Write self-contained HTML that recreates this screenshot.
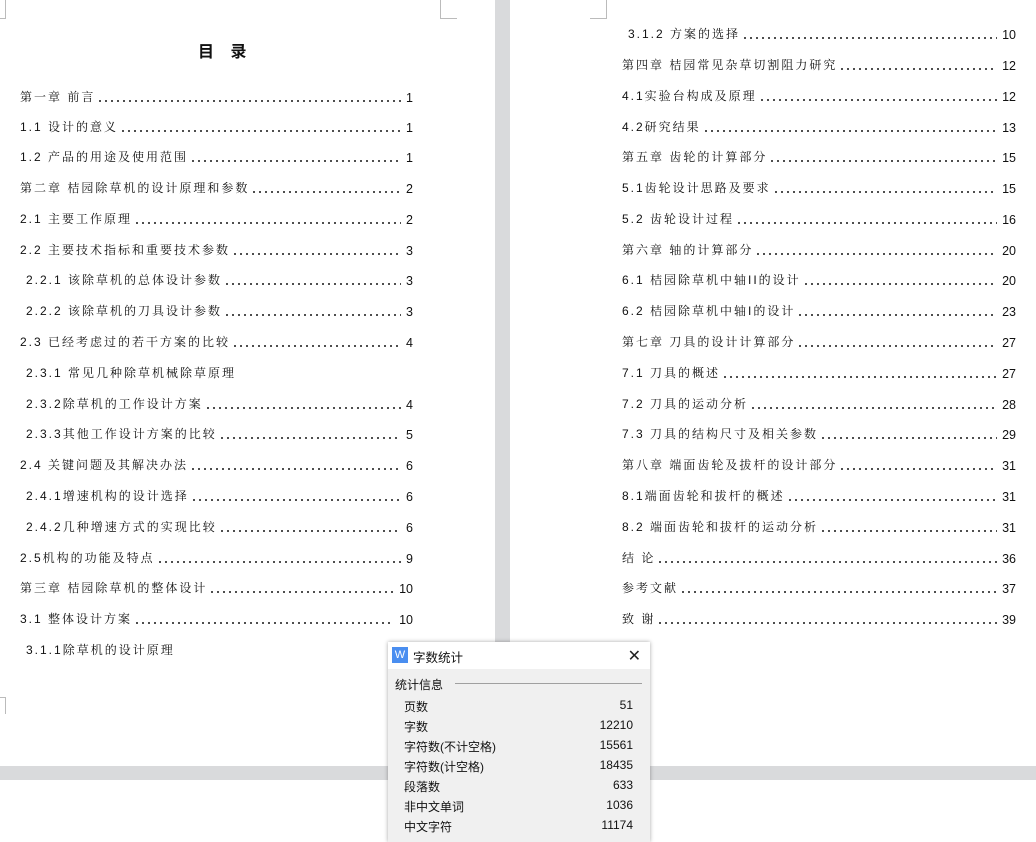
<!DOCTYPE html>
<html><head><meta charset="utf-8"><style>
*{margin:0;padding:0;box-sizing:border-box}
body{width:1036px;height:837px;overflow:hidden;background:#fff;position:relative;font-family:"Liberation Sans","Noto Serif CJK SC","Noto Sans CJK SC",sans-serif;color:#111}
.gap{position:absolute;left:495px;top:0;width:15px;height:766px;background:#d9dadc}
.band{position:absolute;left:0;top:766px;width:1036px;height:14px;background:#d9dadc}
.m{position:absolute;background:#bbb}
.title{position:absolute;left:198px;top:38px;font-size:16px;font-weight:bold;letter-spacing:6px;font-family:"Liberation Sans","Noto Sans CJK SC",sans-serif}
.row{position:absolute;display:flex;align-items:flex-end;height:16px;font-size:12px;letter-spacing:2px;white-space:nowrap}
.row .t{flex:none}
.row .d{flex:1;height:4px;margin:0 5px 2px 2px;background-image:radial-gradient(circle,#222 0.9px,transparent 1.1px);background-size:6px 4px;background-repeat:repeat-x}
.row .n{flex:none;letter-spacing:0;font-size:12.5px}
.L{left:20px;width:413px}
.R{left:622px;width:394px}
.dlg{position:absolute;left:388px;top:642px;width:262px;height:200px;background:#f0f0f0;box-shadow:0 0 4px rgba(0,0,0,.35);font-family:"Liberation Sans","Noto Sans CJK SC",sans-serif;font-size:12px;color:#111}
.dh{height:27px;background:#fff;position:relative}
.ic{position:absolute;left:4px;top:5px;width:16px;height:16px;background:#4a8ef0;color:#fff;font-size:11px;text-align:center;line-height:16px}
.dt{position:absolute;left:25px;top:5px;font-size:12.5px}
.x{position:absolute;right:9px;top:4px;font-size:16px;font-weight:300;color:#222}
.sec{position:absolute;left:7px;top:34px}
.ln{position:absolute;left:67px;right:8px;top:41px;height:1px;background:#a0a0a0}
.it{position:absolute;left:16px;width:229px;display:flex;justify-content:space-between}
</style></head><body>
<div class="gap"></div><div class="band"></div>
<div class="m" style="left:5px;top:0;width:1px;height:18px"></div>
<div class="m" style="left:0;top:18px;width:6px;height:1px"></div>
<div class="m" style="left:440px;top:0;width:1px;height:19px"></div>
<div class="m" style="left:440px;top:18px;width:17px;height:1px"></div>
<div class="m" style="left:606px;top:0;width:1px;height:19px"></div>
<div class="m" style="left:590px;top:18px;width:17px;height:1px"></div>
<div class="m" style="left:5px;top:697px;width:1px;height:17px"></div>
<div class="m" style="left:0;top:697px;width:6px;height:1px"></div>
<div class="title">目 录</div>

<div class="row L" style="top:89px;width:393px"><span class="t">第一章 前言</span><span class="d"></span><span class="n">1</span></div>
<div class="row L" style="top:119px;width:393px"><span class="t">1.1 设计的意义</span><span class="d"></span><span class="n">1</span></div>
<div class="row L" style="top:149px;width:393px"><span class="t">1.2 产品的用途及使用范围</span><span class="d"></span><span class="n">1</span></div>
<div class="row L" style="top:180px;width:393px"><span class="t">第二章 桔园除草机的设计原理和参数</span><span class="d"></span><span class="n">2</span></div>
<div class="row L" style="top:211px;width:393px"><span class="t">2.1 主要工作原理</span><span class="d"></span><span class="n">2</span></div>
<div class="row L" style="top:242px;width:393px"><span class="t">2.2  主要技术指标和重要技术参数</span><span class="d"></span><span class="n">3</span></div>
<div class="row L" style="top:272px;left:26px;width:387px"><span class="t">2.2.1 该除草机的总体设计参数</span><span class="d"></span><span class="n">3</span></div>
<div class="row L" style="top:303px;left:26px;width:387px"><span class="t">2.2.2 该除草机的刀具设计参数</span><span class="d"></span><span class="n">3</span></div>
<div class="row L" style="top:334px;width:393px"><span class="t">2.3  已经考虑过的若干方案的比较</span><span class="d"></span><span class="n">4</span></div>
<div class="row L" style="top:365px;left:26px;width:387px"><span class="t">2.3.1  常见几种除草机械除草原理</span></div>
<div class="row L" style="top:396px;left:26px;width:387px"><span class="t">2.3.2除草机的工作设计方案</span><span class="d"></span><span class="n">4</span></div>
<div class="row L" style="top:426px;left:26px;width:387px"><span class="t">2.3.3其他工作设计方案的比较</span><span class="d"></span><span class="n">5</span></div>
<div class="row L" style="top:457px;width:393px"><span class="t">2.4  关键问题及其解决办法</span><span class="d"></span><span class="n">6</span></div>
<div class="row L" style="top:488px;left:26px;width:387px"><span class="t">2.4.1增速机构的设计选择</span><span class="d"></span><span class="n">6</span></div>
<div class="row L" style="top:519px;left:26px;width:387px"><span class="t">2.4.2几种增速方式的实现比较</span><span class="d"></span><span class="n">6</span></div>
<div class="row L" style="top:550px;width:393px"><span class="t">2.5机构的功能及特点</span><span class="d"></span><span class="n">9</span></div>
<div class="row L" style="top:580px;width:393px"><span class="t">第三章 桔园除草机的整体设计</span><span class="d"></span><span class="n">10</span></div>
<div class="row L" style="top:611px;width:393px"><span class="t">3.1  整体设计方案</span><span class="d"></span><span class="n">10</span></div>
<div class="row L" style="top:642px;left:26px;width:387px"><span class="t">3.1.1除草机的设计原理</span></div>

<div class="row R" style="top:26px;left:628px;width:388px"><span class="t">3.1.2 方案的选择</span><span class="d"></span><span class="n">10</span></div>
<div class="row R" style="top:57px"><span class="t">第四章 桔园常见杂草切割阻力研究</span><span class="d"></span><span class="n">12</span></div>
<div class="row R" style="top:88px"><span class="t">4.1实验台构成及原理</span><span class="d"></span><span class="n">12</span></div>
<div class="row R" style="top:119px"><span class="t">4.2研究结果</span><span class="d"></span><span class="n">13</span></div>
<div class="row R" style="top:149px"><span class="t">第五章 齿轮的计算部分</span><span class="d"></span><span class="n">15</span></div>
<div class="row R" style="top:180px"><span class="t">5.1齿轮设计思路及要求</span><span class="d"></span><span class="n">15</span></div>
<div class="row R" style="top:211px"><span class="t">5.2  齿轮设计过程</span><span class="d"></span><span class="n">16</span></div>
<div class="row R" style="top:242px"><span class="t">第六章 轴的计算部分</span><span class="d"></span><span class="n">20</span></div>
<div class="row R" style="top:272px"><span class="t">6.1 桔园除草机中轴II的设计</span><span class="d"></span><span class="n">20</span></div>
<div class="row R" style="top:303px"><span class="t">6.2 桔园除草机中轴I的设计</span><span class="d"></span><span class="n">23</span></div>
<div class="row R" style="top:334px"><span class="t">第七章 刀具的设计计算部分</span><span class="d"></span><span class="n">27</span></div>
<div class="row R" style="top:365px"><span class="t">7.1 刀具的概述</span><span class="d"></span><span class="n">27</span></div>
<div class="row R" style="top:396px"><span class="t">7.2 刀具的运动分析</span><span class="d"></span><span class="n">28</span></div>
<div class="row R" style="top:426px"><span class="t">7.3 刀具的结构尺寸及相关参数</span><span class="d"></span><span class="n">29</span></div>
<div class="row R" style="top:457px"><span class="t">第八章 端面齿轮及拔杆的设计部分</span><span class="d"></span><span class="n">31</span></div>
<div class="row R" style="top:488px"><span class="t">8.1端面齿轮和拔杆的概述</span><span class="d"></span><span class="n">31</span></div>
<div class="row R" style="top:519px"><span class="t">8.2 端面齿轮和拔杆的运动分析</span><span class="d"></span><span class="n">31</span></div>
<div class="row R" style="top:550px"><span class="t">结 论</span><span class="d"></span><span class="n">36</span></div>
<div class="row R" style="top:580px"><span class="t">参考文献</span><span class="d"></span><span class="n">37</span></div>
<div class="row R" style="top:611px"><span class="t">致 谢</span><span class="d"></span><span class="n">39</span></div>

<div class="dlg">
<div class="dh"><div class="ic">W</div><div class="dt">字数统计</div><div class="x">✕</div></div>
<div class="sec">统计信息</div><div class="ln"></div>
<div class="it" style="top:56px"><span>页数</span><span>51</span></div>
<div class="it" style="top:76px"><span>字数</span><span>12210</span></div>
<div class="it" style="top:96px"><span>字符数(不计空格)</span><span>15561</span></div>
<div class="it" style="top:116px"><span>字符数(计空格)</span><span>18435</span></div>
<div class="it" style="top:136px"><span>段落数</span><span>633</span></div>
<div class="it" style="top:156px"><span>非中文单词</span><span>1036</span></div>
<div class="it" style="top:176px"><span>中文字符</span><span>11174</span></div>
</div>
</body></html>
